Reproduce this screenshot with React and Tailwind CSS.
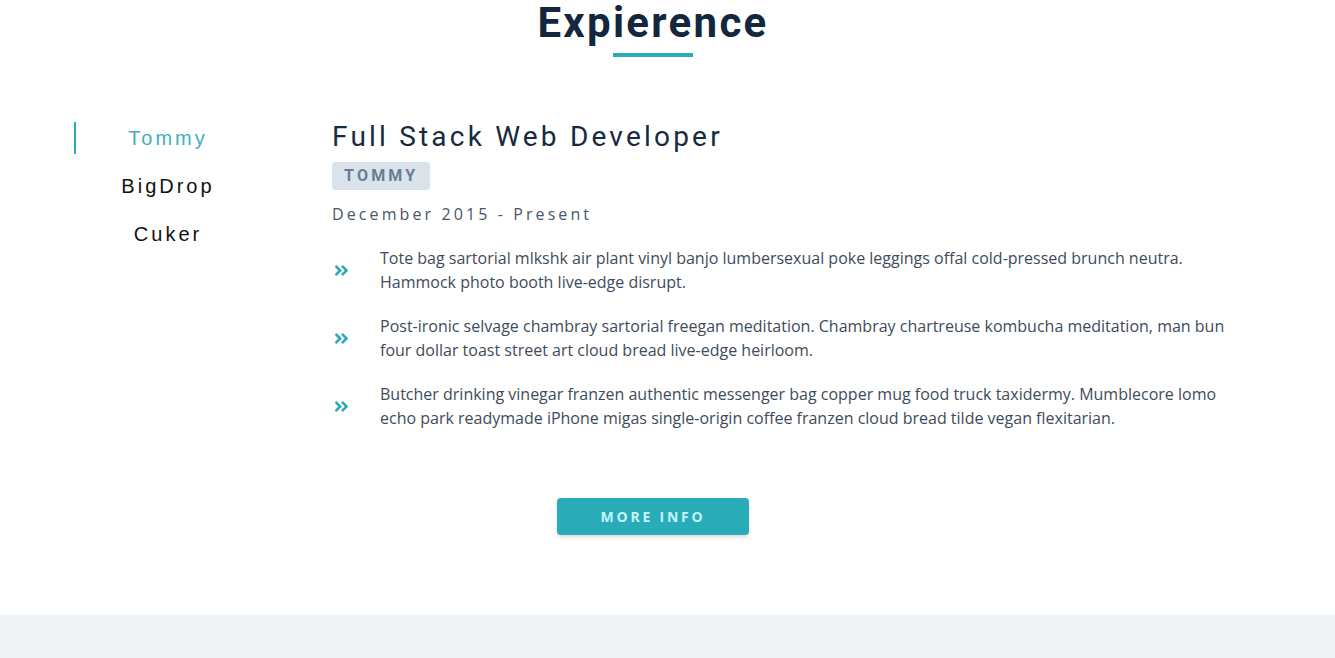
import React, { useState } from 'react';
import { FaAngleDoubleRight } from 'react-icons/fa';

const jobs = {
  Tommy: {
    title: 'Full Stack Web Developer',
    company: 'TOMMY',
    dates: 'December 2015 - Present',
    duties: [
      'Tote bag sartorial mlkshk air plant vinyl banjo lumbersexual poke leggings offal cold-pressed brunch neutra. Hammock photo booth live-edge disrupt.',
      'Post-ironic selvage chambray sartorial freegan meditation. Chambray chartreuse kombucha meditation, man bun four dollar toast street art cloud bread live-edge heirloom.',
      'Butcher drinking vinegar franzen authentic messenger bag copper mug food truck taxidermy. Mumblecore lomo echo park readymade iPhone migas single-origin coffee franzen cloud bread tilde vegan flexitarian.',
    ],
  },
  BigDrop: {
    title: 'Front-End Engineer',
    company: 'BIGDROP',
    dates: 'May 2015 - December 2015',
    duties: [
      'Hashtag drinking vinegar scenester mumblecore snackwave four dollar toast, lumbersexual XOXO.',
      'Cardigan prism bicycle rights put a bird on it deep v.',
    ],
  },
  Cuker: {
    title: 'Engineering Intern',
    company: 'CUKER',
    dates: 'May 2014 - September 2015',
    duties: [
      'Iceland poke art party gluten-free kickstarter yuccie beard vape.',
      'Sustainable marfa woke pinterest, shoreditch chambray tacos.',
    ],
  },
};

export default function App() {
  const [active, setActive] = useState('Tommy');
  const job = jobs[active];

  return (
    <div className="min-h-screen bg-white" style={{ fontFamily: '"Open Sans", sans-serif' }}>
      <section className="w-[1306px] pb-[80px]">
        {/* heading */}
        <div className="flex flex-col items-center">
          <h2 className="text-[42px] leading-[46px] font-bold tracking-[2.3px] text-[#13273f] font-['Roboto',sans-serif]">Expierence</h2>
          <div className="w-[80px] h-[4px] mt-[7px] bg-[#2aacb8]"></div>
        </div>

        <div className="flex mt-[63px]">
          {/* company tabs */}
          <div className="ml-[74px] w-[186px] flex flex-col gap-[16px] pt-[2px] font-['Liberation_Sans',Arial,sans-serif]">
            {Object.keys(jobs).map((name) => (
              <button
                key={name}
                onClick={() => setActive(name)}
                className={`h-[32px] text-[20px] tracking-[3px] border-l-2 ${
                  active === name ? 'border-[#2aacb8] text-[#3fb1bd]' : 'border-transparent text-[#111]'
                }`}
              >
                {name}
              </button>
            ))}
          </div>

          {/* job info */}
          <article className="ml-[72px] w-[918px]">
            <h3 className="text-[28px] leading-[34px] tracking-[3.2px] text-[#172a42] font-['Roboto',sans-serif]">{job.title}</h3>
            <div className="mt-[8px]">
              <span className="inline-block h-[28px] px-[12px] rounded-[4px] bg-[#dae2ec] text-[#687d95] text-[16px] leading-[28px] font-bold tracking-[3.2px] font-['Roboto',sans-serif]">
                {job.company}
              </span>
            </div>
            <p className="mt-[12px] text-[16px] leading-[24px] tracking-[3.1px] text-[#4a5568]">{job.dates}</p>
            <div className="mt-[20px] flex flex-col gap-[20px]">
              {job.duties.map((duty, i) => (
                <div key={i} className="flex items-center">
                  <span className="w-[48px] shrink-0 pl-[1px]">
                    <FaAngleDoubleRight className="text-[#2aacb8] text-[17px]" />
                  </span>
                  <p className="w-[870px] text-[16px] leading-[24px] text-[#3e4b5b]">{duty}</p>
                </div>
              ))}
            </div>
          </article>
        </div>

        <div className="flex justify-center mt-[68px]">
          <button className="w-[192px] h-[37px] rounded-[4px] bg-[#2aacb8] text-[#c3f5fa] text-[14px] font-bold tracking-[2.8px] shadow-[0_2px_4px_rgba(0,0,0,0.15)]">
            MORE INFO
          </button>
        </div>
      </section>
      <div className="h-[60px] bg-[#eff3f6]"></div>
    </div>
  );
}
